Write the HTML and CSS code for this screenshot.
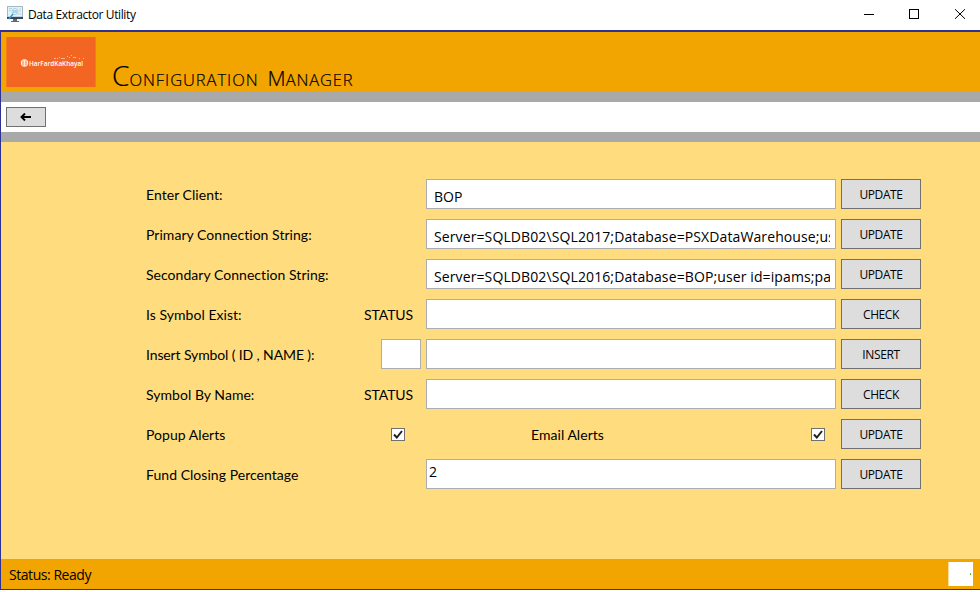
FILE: index.html
```html
<!DOCTYPE html>
<html lang="en">
<head>
<meta charset="utf-8">
<title>Data Extractor Utility</title>
<link rel="stylesheet" href="styles.css">
</head>
<body>
<div class="titlebar">
  <svg class="app-icon" width="16" height="16" viewBox="0 0 16 16">
    <rect x=".5" y=".5" width="15" height="10.5" fill="#e4f2f7" stroke="#a4b8c3"/>
    <path d="M2 2.5h3M2 4.5h2M12 3h2M12 5h2M11 8h3" stroke="#a9d9e8"/>
    <path d="M0 11h16v2H0z" fill="#34495e"/>
    <path d="M6 13h4v2H6zM4 15h8v1H4z" fill="#596c7a"/>
    <circle cx="8" cy="5.5" r="3" fill="#e9f8fc" stroke="#a5cfdf"/>
    <path d="M7 4v3M9 4v3" stroke="#7faec4"/>
    <path d="M6 8l-4 5" stroke="#2c9bd6" stroke-width="1.500"/>
  </svg>
  <span class="app-name">Data Extractor Utility</span>
  <svg class="controls" width="102" height="12" viewBox="0 0 102 12" fill="none" stroke="#000">
    <path d="M0 5.5h10"/>
    <rect x="45.5" y=".5" width="9" height="9"/>
    <path d="M91 .2l10 9.600M101 .2l-10 9.600"/>
  </svg>
</div>
<div class="window">
  <header class="banner">
    <div class="logo">
      <svg width="89" height="50" viewBox="0 0 89 50">
        <circle cx="18.500" cy="26" r="3.700" fill="#ffe9df"/>
        <path d="M17 23.500v5M20 23.500v5" stroke="#f26522" stroke-width=".8"/>
        <text class="logo-text" x="23" y="28.500" textLength="54" lengthAdjust="spacingAndGlyphs">HarFardKaKhayal</text>
        <path d="M48 21.500h2m1 0h1m1-1h1m1 1h4m2-2h1m1 1h1m1-2h1m1 2h3m3 1h1m3 0h1" stroke="#ffd9c8" stroke-opacity=".7"/>
      </svg>
    </div>
    <h1 class="title"><span class="cap-lg">C</span><span class="conf">ONFIGURATION</span><span class="cap-md">M</span><span class="mana">ANAGER</span></h1>
  </header>
  <div class="toolbar">
    <button class="back" aria-label="Back"><svg width="12" height="8" viewBox="0 0 12 8"><path d="M1.500 4H11M5 .5L1.500 4 5 7.500" fill="none" stroke="#000" stroke-width="1.900"/></svg></button>
  </div>
  <main class="form">
    <div class="row"><label>Enter Client:</label><div class="mid"></div><div class="field"><span class="val">BOP</span></div><button>UPDATE</button></div>
    <div class="row"><label>Primary Connection String:</label><div class="mid"></div><div class="field"><span class="val conn">Server=SQLDB02\SQL2017;Database=PSXDataWarehouse;us</span></div><button>UPDATE</button></div>
    <div class="row"><label>Secondary Connection String:</label><div class="mid"></div><div class="field"><span class="val conn">Server=SQLDB02\SQL2016;Database=BOP;user id=ipams;pa</span></div><button>UPDATE</button></div>
    <div class="row"><label>Is Symbol Exist:</label><div class="mid status">STATUS</div><div class="field"></div><button>CHECK</button></div>
    <div class="row"><label class="narrow">Insert Symbol ( ID , NAME ):</label><div class="mid"><div class="field small"></div></div><div class="field"></div><button>INSERT</button></div>
    <div class="row"><label>Symbol By Name:</label><div class="mid status">STATUS</div><div class="field"></div><button>CHECK</button></div>
    <div class="row"><label>Popup Alerts</label>
      <div class="mid checkcell"><svg class="check" width="14" height="13" viewBox="0 0 14 13"><rect x=".5" y=".5" width="13" height="12" fill="#fff" stroke="#707070"/><path d="M3 6.500l2.800 3L11 3" fill="none" stroke="#212121" stroke-width="2"/></svg></div>
      <div class="email"><span>Email Alerts</span><svg class="check" width="14" height="13" viewBox="0 0 14 13"><rect x=".5" y=".5" width="13" height="12" fill="#fff" stroke="#707070"/><path d="M3 6.500l2.800 3L11 3" fill="none" stroke="#212121" stroke-width="2"/></svg></div>
      <button>UPDATE</button></div>
    <div class="row"><label>Fund Closing Percentage</label><div class="mid"></div><div class="field tight"><span class="val">2</span></div><button>UPDATE</button></div>
  </main>
  <footer class="statusbar"><span class="ready">Status: Ready</span><div class="thumb"><i></i></div></footer>
</div>
</body>
</html>
```
FILE: styles.css
```css
* { box-sizing: border-box; }
body { margin: 0; width: 980px; height: 592px; overflow: hidden; background: #fff; color: #000; font-family: "Open Sans", sans-serif; }
.titlebar { height: 30px; display: flex; align-items: center; padding: 0 14px 0 7px; }
.app-icon { margin-top: -3px; }
.app-name { margin-left: 5px; font-size: 12px; letter-spacing: -0.38px; line-height: 16px; white-space: nowrap; }
.controls { margin-left: auto; }
.window { height: 560px; border: solid #2e3192; border-width: 2px 0 1px 1px; display: flex; flex-direction: column; }
.banner { height: 60px; background: #f2a500; display: flex; padding: 5px 0 0 5px; }
.logo { width: 90px; height: 50px; background: #f26522; border: solid #f27b1b; border-width: 0 1px; flex: none; }
.logo svg { display: block; margin-left: -1px; }
.logo-text { font: 600 7px "Open Sans", sans-serif; fill: #fff; }
.title { margin: 20px 0 0 16px; font-weight: 300; -webkit-text-stroke: 0.2px #000; line-height: 36px; height: 36px; white-space: nowrap; display: flex; align-items: baseline; font-size: 16.5px; }
.cap-lg { font-size: 28px; }
.cap-md { font-size: 21px; margin-left: 9px; }
.conf { letter-spacing: 0.95px; }
.mana { letter-spacing: 0.85px; }
.toolbar { height: 50px; border: solid #a9a9a9; border-width: 10px 0; background: #fff; padding: 5px; }
button { border: 1px solid #707070; background: #ddd; border-radius: 0; padding: 1px 0 0; font: 12px/16px "Open Sans", sans-serif; letter-spacing: -0.4px; color: #000; width: 80px; height: 30px; }
.back { width: 40px; height: 20px; padding: 0; display: flex; align-items: center; justify-content: center; }
.form { flex: 1; background: #ffdd7f; padding: 37px 59px 0 145px; display: flex; flex-direction: column; gap: 10px; }
.row { display: grid; grid-template-columns: 200px 80px 410px 85px; height: 30px; }
.row > button { margin-left: 5px; }
label, .status, .email span { font: 14px/30px Lato, sans-serif; font-variant-ligatures: no-common-ligatures; white-space: nowrap; padding-top: 1px; letter-spacing: 0.04px; }
.narrow { letter-spacing: -0.12px; }
.mid { display: flex; justify-content: flex-end; }
.status { padding-right: 13px; letter-spacing: -0.1px; }
.field { height: 30px; background: #fff; border: 1px solid #abadb3; padding: 6px 5px 0 7px; }
.val { display: block; overflow: hidden; font-size: 14px; line-height: 21px; height: 21px; white-space: nowrap; }
.conn { letter-spacing: 0.11px; }
.small { width: 40px; margin-right: 5px; }
.tight { padding: 1px 2px; }
.checkcell { align-items: center; padding-right: 21px; }
.email { display: flex; justify-content: space-between; align-items: center; padding: 0 11px 0 105px; }
.statusbar { height: 30px; background: #f2a500; display: flex; align-items: center; justify-content: space-between; padding: 0 7px 0 8px; }
.ready { font-size: 14px; letter-spacing: -0.45px; line-height: 20px; padding-top: 2px; }
.thumb { width: 25px; height: 24px; background: #fff; border-left: 1px solid #fadb99; display: flex; align-items: center; justify-content: flex-end; padding-right: 2px; }
.thumb i { width: 1px; height: 2px; background: #6cb52d; }
```
